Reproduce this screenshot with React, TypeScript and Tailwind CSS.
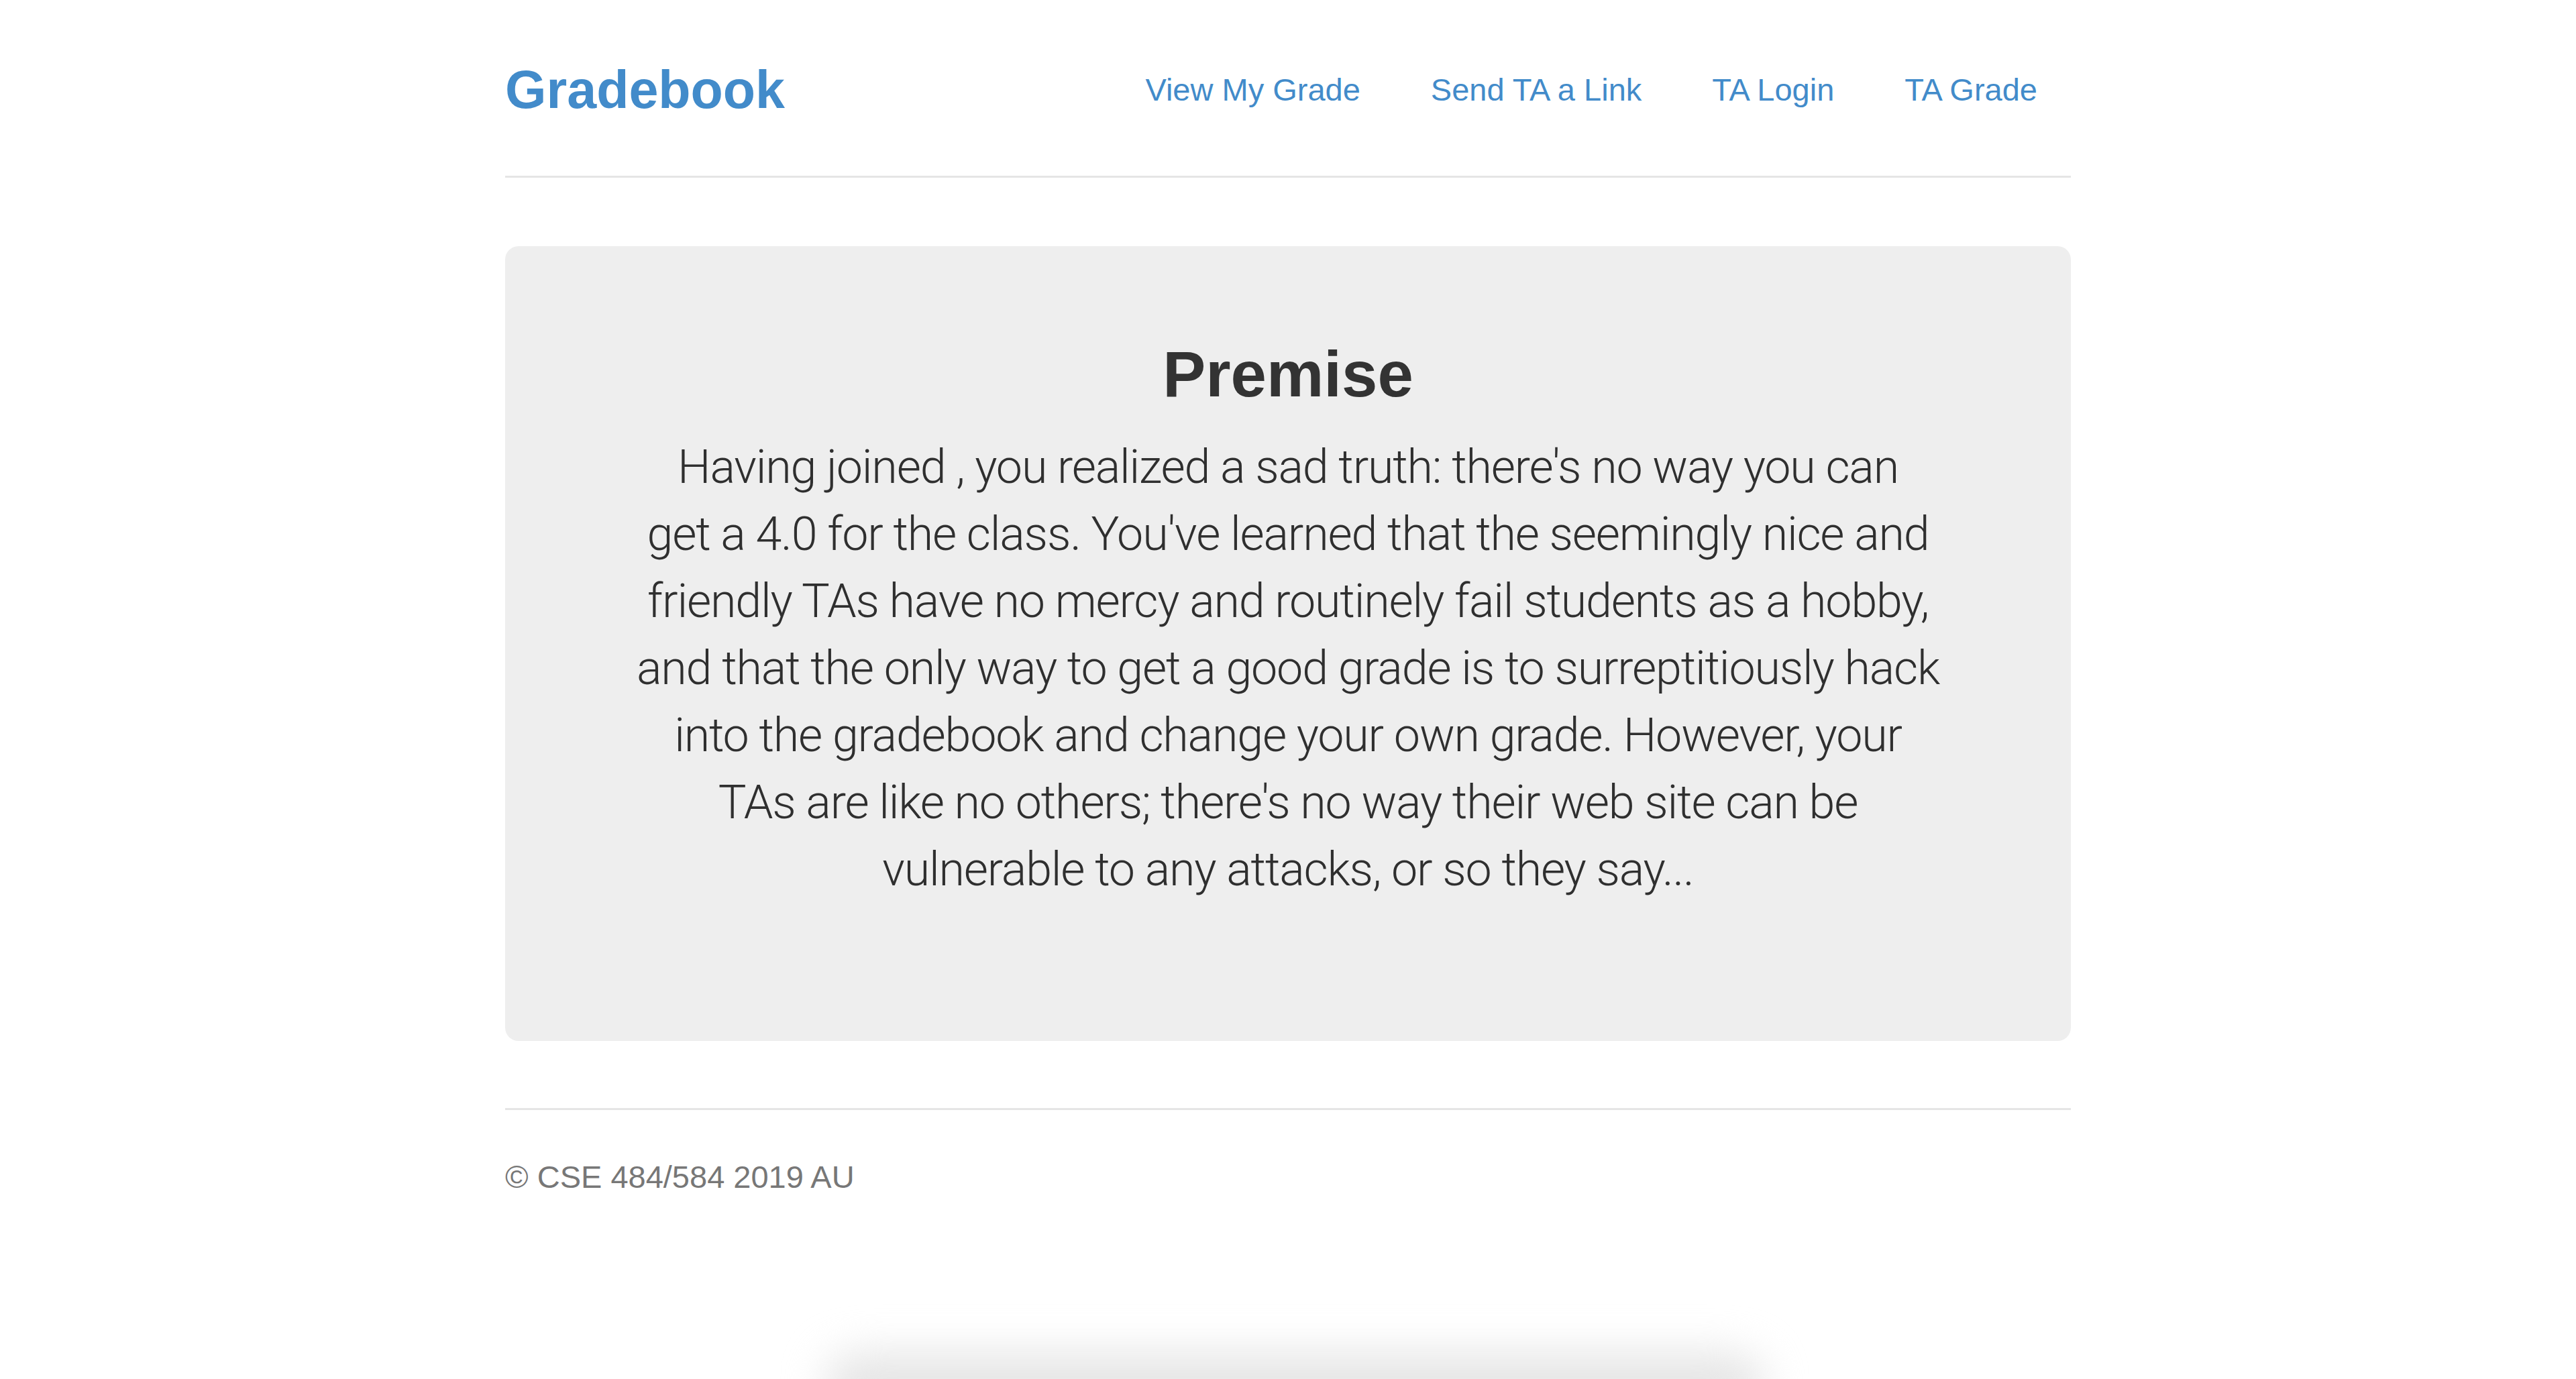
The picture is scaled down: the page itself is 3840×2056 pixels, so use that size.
import React from 'react'

const navLinks = ['View My Grade', 'Send TA a Link', 'TA Login', 'TA Grade']

const premiseLines = [
  'Having joined , you realized a sad truth: there\'s no way you can',
  'get a 4.0 for the class. You\'ve learned that the seemingly nice and',
  'friendly TAs have no mercy and routinely fail students as a hobby,',
  'and that the only way to get a good grade is to surreptitiously hack',
  'into the gradebook and change your own grade. However, your',
  'TAs are like no others; there\'s no way their web site can be',
  'vulnerable to any attacks, or so they say...',
]

function Header() {
  return (
    <div className="flex items-center justify-between h-[133px] border-b-[3px] border-[#e5e5e5] box-content pb-[62px]">
      <h3 className="text-[79px] font-bold text-[#428bca] leading-[133px] m-0">Gradebook</h3>
      <ul className="flex items-center">
        {navLinks.map((link, index) =>
          <li key={index} className="ml-[5px]">
            <a href="#" className="block px-[50px] py-[33px] text-[47px] leading-[67px] text-[#428bca]">{link}</a>
          </li>
        )}
      </ul>
    </div>
  )
}

function App() {
  return (
    <div className="relative min-h-[2056px] overflow-hidden bg-white text-[#333] font-['Liberation_Sans',Arial,sans-serif]">
      <div className="mx-auto w-[2334px] pt-[67px]">
        <Header />
        <div className="mt-[102px] rounded-[20px] bg-[#eeeeee] px-[200px] pt-[136px] pb-[206px] text-center">
          <h2 className="text-[96px] font-bold leading-[110px] mb-[33px]">Premise</h2>
          <p className="flex flex-col items-center font-['Roboto',sans-serif] text-[70px] font-light leading-[100px] tracking-[-1.2px] text-[#2f2f2f]">
            {premiseLines.map((line, index) =>
              <span key={index} className="whitespace-nowrap">{line}</span>
            )}
          </p>
        </div>
        <div className="mt-[100px] border-t-[3px] border-[#e5e5e5] pt-[66px] text-[47px] leading-[67px] text-[#777]">
          <p>© CSE 484/584 2019 AU</p>
        </div>
      </div>
      <div className="absolute left-[1230px] bottom-[-60px] w-[1400px] h-[100px] rounded-full bg-[#e6e6e6] blur-[30px]" />
    </div>
  )
}

export default App
